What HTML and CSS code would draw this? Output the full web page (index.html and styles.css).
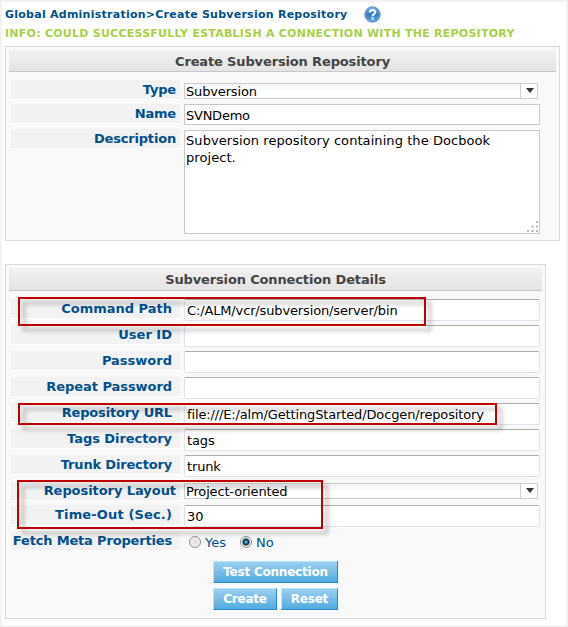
FILE: index.html
```html
<!DOCTYPE html>
<html lang="en">
<head>
<meta charset="utf-8">
<title>Create Subversion Repository</title>
<link rel="stylesheet" href="styles.css">
</head>
<body>
<main class="page">
  <header class="crumbs"><span class="path">Global Administration&gt;Create Subversion Repository</span>
    <svg class="help" width="17" height="17" viewBox="0 0 17 17" aria-label="Help">
      <defs><linearGradient id="g" x1="0" y1="0" x2="0" y2="1"><stop offset="0" stop-color="#6fa9dc"/><stop offset=".5" stop-color="#357dc0"/><stop offset="1" stop-color="#4fa5e4"/></linearGradient></defs>
      <circle cx="8.5" cy="8.5" r="7.7" fill="url(#g)" stroke="#3974ae" stroke-width=".8"/>
      <circle cx="8.5" cy="8.5" r="6.9" fill="none" stroke="#8fbfe6" stroke-width=".6"/>
      <path d="M5.8 6.5C5.8 3.2 11.2 3.2 11.2 6.2C11.2 8.1 8.6 8.1 8.6 10.2" fill="none" stroke="#fff" stroke-width="2"/>
      <rect x="7.5" y="11.4" width="2.2" height="2.1" fill="#fff"/>
    </svg>
  </header>
  <p class="info">INFO: COULD SUCCESSFULLY ESTABLISH A CONNECTION WITH THE REPOSITORY</p>

  <section class="panel repo">
    <h2>Create Subversion Repository</h2>
    <div class="row r-type"><label>Type</label><div class="select"><span>Subversion</span><i></i></div></div>
    <div class="row r-name"><label>Name</label><div class="flat">SVNDemo</div></div>
    <div class="row r-desc"><label>Description</label><div class="area">Subversion repository containing the Docbook<br>project.
      <svg class="grip" width="12" height="12" viewBox="0 0 12 12"><path d="M9 0h2v2h-2zM4.500 4.500h2v2h-2zM9 4.500h2v2h-2zM0 9h2v2h-2zM4.500 9h2v2h-2zM9 9h2v2h-2z" fill="#b5b5b5"/></svg></div></div>
  </section>

  <section class="panel conn">
    <h2>Subversion Connection Details</h2>
    <div class="row in"><label>Command Path</label><div class="input">C:/ALM/vcr/subversion/server/bin</div></div>
    <div class="row in"><label>User ID</label><div class="input"></div></div>
    <div class="row in"><label>Password</label><div class="input"></div></div>
    <div class="row in"><label class="snug">Repeat Password</label><div class="input"></div></div>
    <div class="row in"><label class="tight">Repository URL</label><div class="input">file:///E:/alm/GettingStarted/Docgen/repository</div></div>
    <div class="row in"><label class="snug">Tags Directory</label><div class="input">tags</div></div>
    <div class="row in"><label class="tight">Trunk Directory</label><div class="input">trunk</div></div>
    <div class="row r-layout"><label class="snug">Repository Layout</label><div class="select"><span>Project-oriented</span><i></i></div></div>
    <div class="row in"><label class="loose">Time-Out (Sec.)</label><div class="input">30</div></div>
    <div class="row in"><label class="tight">Fetch Meta Properties</label><div class="radios"><b class="radio"></b><span class="yes">Yes</span><b class="radio on"></b><span>No</span></div></div>
    <div class="buttons">
      <button class="test">Test Connection</button>
      <div class="pair"><button class="create">Create</button><button class="reset">Reset</button></div>
    </div>
  </section>
  <div class="mark m1"></div>
  <div class="mark m2"></div>
  <div class="mark m3"></div>
</main>
</body>
</html>
```
FILE: styles.css
```css
* { box-sizing: border-box; }
body { margin: 0; font: 13px/17px "DejaVu Sans", sans-serif; color: #000; }
.page { position: relative; width: 568px; height: 627px; padding: 0 3px; border: 2px solid #f2f2f2; background: #fff; overflow: hidden; }
.crumbs { display: flex; height: 24px; align-items: center; font-size: 11px; font-weight: bold; color: #00508c; }
.path { width: 342px; white-space: nowrap; letter-spacing: .25px; }
.help { margin-left: 17px; }
.info { margin: 0; height: 20px; line-height: 16px; font-size: 11px; font-weight: bold; letter-spacing: .25px; color: #a9d046; white-space: nowrap; }
.panel { border: 1px solid #dadada; background: #f9f9f9; padding: 3px; }
.repo { width: 555px; height: 195px; }
.conn { width: 541px; height: 355px; margin-top: 23px; }
h2 { margin: 0; height: 22px; border-bottom: 1px solid #c8c8c8; background: linear-gradient(#f1f1f1, #e4e4e4); font-size: 13px; line-height: 23px; letter-spacing: -.14px; text-align: center; color: #444; }
.conn h2 { height: 23px; }
.row { display: flex; align-items: flex-start; padding-left: 2px; }
label { width: 169px; height: 20px; margin-right: 4px; padding-right: 8px; border-bottom: 1px solid #fff; background: #f2f2f2; font-weight: bold; line-height: 19px; text-align: right; color: #00508c; white-space: nowrap; }
.snug { letter-spacing: -.06px; }
.tight { letter-spacing: -.17px; }
.loose { letter-spacing: .14px; }
.repo label { padding-right: 4px; letter-spacing: -.18px; }
.r-type { margin-top: 8px; height: 24px; }
.r-name { height: 25px; }
.select { display: flex; width: 354px; height: 16px; margin-top: 3px; padding-left: 1px; border: 1px solid #ccc; background: linear-gradient(#f3f3f3, #fff 60%); line-height: 16px; }
.select span { flex: 1; white-space: nowrap; letter-spacing: -.16px; }
.select i { width: 17px; border-left: 1px solid #ccc; background: #fff; padding: 4px 0 0 5px; }
.select i::after { content: ""; display: block; width: 8px; height: 5px; background: #333; clip-path: polygon(0 0, 100% 0, 50% 100%); }
.flat, .area { width: 356px; height: 21px; padding: 2px 1px; border: 1px solid #c8c8c8; background: #fff; }
.flat { letter-spacing: -.25px; }
.area { position: relative; height: 104px; margin-top: 1px; padding-top: 1px; white-space: nowrap; letter-spacing: .07px; }
.grip { position: absolute; right: 0; bottom: 0; }
.conn h2 + .row { margin-top: 8px; }
.in { height: 26px; }
.input { width: 356px; height: 22px; padding: 2px 2px 0; border: 1px solid #dfe2ec; border-top-color: #abadb3; border-radius: 2px; background: #fff; line-height: 18px; letter-spacing: -.14px; white-space: nowrap; }
.r-layout { height: 24px; }
.r-layout label { padding-right: 4px; }
.r-layout .select { margin-top: 2px; }
.radios { display: flex; align-items: center; height: 22px; padding-left: 5px; color: #00508c; }
.radio { width: 12px; height: 12px; margin-right: 4px; border: 1px solid #8e8f8f; border-radius: 50%; background: radial-gradient(#ddd, #f8f8f8); }
.radio.on { background: radial-gradient(circle at 50% 50%, #8bd7f5 0, #17547c 28%, #0c304d 46%, #eee 56%); }
.yes { width: 35px; }
.buttons { width: 125px; margin: 4px 0 0 204px; }
.pair { display: flex; gap: 4px; margin-top: 5px; }
button { height: 22px; padding: 0; border: 1px solid #2389cc; border-top-color: #b3e6fa; border-left-color: #b3e6fa; background: linear-gradient(#9dd0f0, #50abe0); color: #fff; font: bold 12px/20px "DejaVu Sans", sans-serif; letter-spacing: -.22px; white-space: nowrap; }
.test { display: block; width: 125px; }
.create { width: 64px; }
.reset { width: 57px; }
.mark { position: absolute; border: 2px solid #c00000; filter: drop-shadow(5px 5px 2px rgba(0,0,0,.32)); }
.m1 { left: 16px; top: 295px; width: 408px; height: 29px; }
.m2 { left: 16px; top: 401px; width: 479px; height: 22px; }
.m3 { left: 15px; top: 478px; width: 306px; height: 49px; }
```
